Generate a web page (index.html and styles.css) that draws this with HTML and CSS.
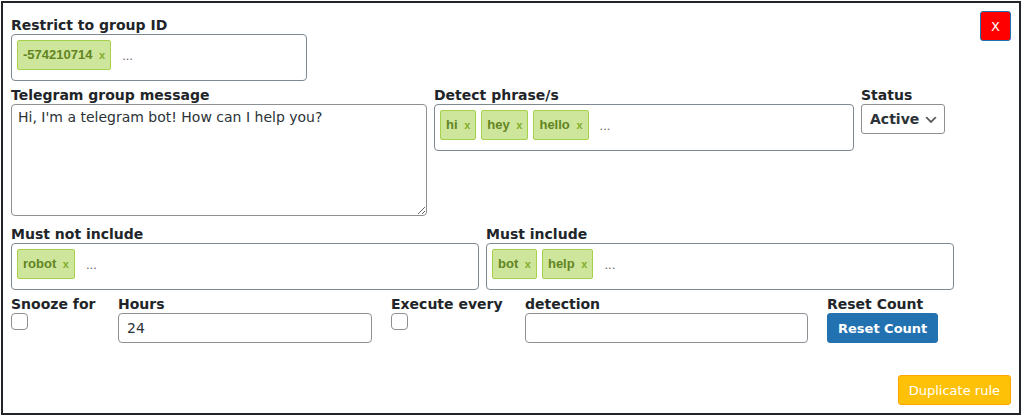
FILE: index.html
```html
<!DOCTYPE html>
<html lang="en">
<head>
    <meta charset="UTF-8">
    <meta name="viewport" content="width=device-width, initial-scale=1.0">
    <title>Telegram bot rules</title>
    <link rel="stylesheet" href="styles.css">
</head>
<body>
    <form class="rule">
        <div class="rule-top">
            <div class="field group-field">
                <label for="groupId">Restrict to group ID</label>
                <div class="tags">
                    <span class="tag">-574210714 <a href="#">x</a></span>
                    <input type="text" id="groupId" class="tag-input" placeholder="...">
                </div>
            </div>
            <button type="button" class="btn btn-close">X</button>
        </div>

        <div class="row">
            <div class="field message-field">
                <label for="message">Telegram group message</label>
                <textarea id="message">Hi, I'm a telegram bot! How can I help you?</textarea>
            </div>
            <div class="field detect-field">
                <label for="detect">Detect phrase/s</label>
                <div class="tags">
                    <span class="tag">hi <a href="#">x</a></span>
                    <span class="tag">hey <a href="#">x</a></span>
                    <span class="tag">hello <a href="#">x</a></span>
                    <input type="text" id="detect" class="tag-input" placeholder="...">
                </div>
            </div>
            <div class="field">
                <label for="status">Status</label>
                <div class="select-wrap">
                    <select id="status">
                        <option>Active</option>
                    </select>
                    <svg class="chevron" width="16" height="16" viewBox="0 0 20 20"><path d="M5 6l5 5 5-5 2 1-7 7-7-7 2-1z" fill="#555"/></svg>
                </div>
            </div>
        </div>

        <div class="row">
            <div class="field include-field">
                <label for="exclude">Must not include</label>
                <div class="tags">
                    <span class="tag">robot <a href="#">x</a></span>
                    <input type="text" id="exclude" class="tag-input" placeholder="...">
                </div>
            </div>
            <div class="field include-field">
                <label for="include">Must include</label>
                <div class="tags">
                    <span class="tag">bot <a href="#">x</a></span>
                    <span class="tag">help <a href="#">x</a></span>
                    <input type="text" id="include" class="tag-input" placeholder="...">
                </div>
            </div>
        </div>

        <div class="row row-wide">
            <div class="field snooze-field">
                <label for="snooze">Snooze for</label>
                <input type="checkbox" id="snooze">
            </div>
            <div class="field hours-field">
                <label for="hours">Hours</label>
                <input type="text" id="hours" class="text-input" value="24">
            </div>
            <div class="field execute-field">
                <label for="execute">Execute every</label>
                <input type="checkbox" id="execute">
            </div>
            <div class="field detection-field">
                <label for="detection">detection</label>
                <input type="text" id="detection" class="text-input">
            </div>
            <div class="field">
                <label for="reset">Reset Count</label>
                <button type="button" id="reset" class="btn btn-reset">Reset Count</button>
            </div>
        </div>

        <div class="actions">
            <button type="button" class="btn btn-duplicate">Duplicate rule</button>
        </div>
    </form>
</body>
</html>
```
FILE: styles.css
```css
* {
    box-sizing: border-box;
}

body {
    margin: 1px;
    background: #fff;
    color: #212529;
    font-family: Verdana, "DejaVu Sans", sans-serif;
    font-size: 14px;
    line-height: 18px;
}

.rule {
    padding: 8px;
    border: 2px solid #212529;
}

.rule-top {
    display: flex;
    justify-content: space-between;
    align-items: flex-start;
}

.row {
    display: flex;
    align-items: flex-start;
    gap: 7px;
}

.row-wide {
    gap: 19px;
}

.field {
    display: flex;
    flex-direction: column;
    align-items: flex-start;
    padding-top: 5px;
}

.group-field {
    width: 29.6%;
}

.message-field {
    width: 41.6%;
    padding-bottom: 4px;
}

.detect-field {
    width: 42%;
}

.include-field {
    width: 46.8%;
}

.snooze-field {
    min-width: 88px;
}

.hours-field {
    width: 25.4%;
}

.execute-field {
    min-width: 115px;
}

.detection-field {
    width: 28.3%;
}

label {
    font-weight: bold;
    white-space: nowrap;
}

input,
textarea,
select,
.tags {
    margin: 0;
    border: 1px solid #8c8f94;
    border-radius: 4px;
    background: #fff;
    color: #2c3338;
    font-family: inherit;
    font-size: 14px;
}

textarea {
    width: 100%;
    height: 112px;
    padding: 2px 6px;
    line-height: 20px;
    resize: vertical;
}

.text-input {
    width: 100%;
    height: 30px;
    padding: 0 8px;
}

input[type="checkbox"] {
    appearance: none;
    width: 17px;
    height: 17px;
}

.tags {
    display: flex;
    flex-wrap: wrap;
    width: 100%;
    padding: 5px 5px 0;
    border-color: #7e8993;
    font-family: "Liberation Sans", Arial, sans-serif;
    font-size: 13px;
}

.tag {
    height: 30px;
    margin: 0 5px 10px 0;
    padding: 5px;
    border: 1px solid #a5d24a;
    border-radius: 2px;
    background: #cde69c;
    color: #638421;
    font-weight: bold;
    white-space: pre;
}

.tag a {
    margin-left: 3px;
    color: #82ad2b;
    font-size: 11px;
    text-decoration: none;
}

.tag-input {
    width: 80px;
    height: 30px;
    padding: 5px 6px;
    border: 0;
    background: transparent;
    font-size: 13px;
}

.tag-input::placeholder {
    color: #666;
}

.select-wrap {
    position: relative;
}

select {
    appearance: none;
    width: 84px;
    height: 30px;
    padding: 0 24px 0 8px;
    border-radius: 3px;
    font-weight: bold;
}

.chevron {
    position: absolute;
    top: 8px;
    right: 6px;
    pointer-events: none;
}

.btn {
    height: 30px;
    padding: 0 10px;
    border: 1px solid #2271b1;
    border-radius: 3px;
    background: #2271b1;
    color: #fff;
    font-family: inherit;
    font-size: 13px;
}

.btn-close {
    background: #f00;
}

.btn-reset {
    font-weight: bold;
}

.actions {
    display: flex;
    justify-content: flex-end;
    margin-top: 32px;
}

.btn-duplicate {
    border-color: #ffa500;
    background: #ffc107;
}
```
